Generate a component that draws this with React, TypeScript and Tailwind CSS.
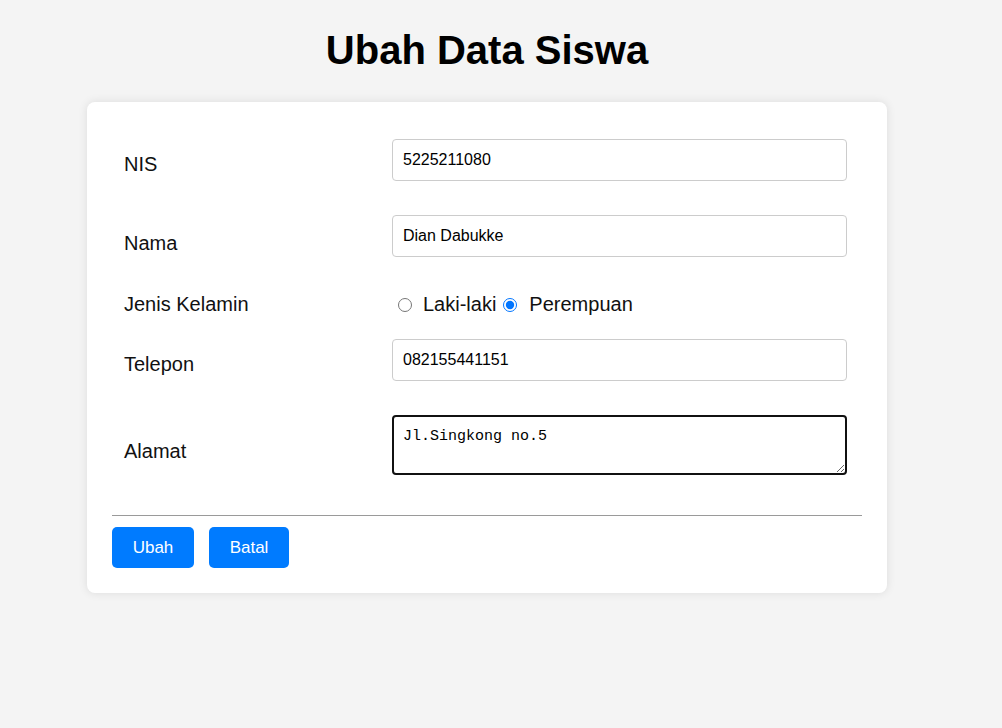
import React from "react";

const field =
  "block w-[455px] h-[42px] px-[10px] border border-[#cccccc] rounded-[4px] bg-white text-[16px] text-black outline-none";

export default function App() {
  return (
    <div className="min-h-screen bg-[#f4f4f4] font-['Liberation_Sans',Arial,sans-serif] text-[#111]">
      <div className="w-[800px] ml-[87px] pt-[27px] pb-[40px]">
        <h1 className="text-center text-[40px] leading-[46px] font-bold text-black mb-[29px]">
          Ubah Data Siswa
        </h1>

        <form className="bg-white rounded-lg shadow-[0_0_10px_rgba(0,0,0,0.1)] p-[25px]">
          {/* NIS */}
          <div className="flex h-[76px]">
            <label className="w-[280px] pl-[12px] mt-[26px] text-[20px] leading-[23px]">NIS</label>
            <div className="mt-[12px]">
              <input className={field} defaultValue="5225211080" />
            </div>
          </div>

          {/* Nama */}
          <div className="flex h-[76px]">
            <label className="w-[280px] pl-[12px] mt-[29px] text-[20px] leading-[23px]">Nama</label>
            <div className="mt-[12px]">
              <input className={field} defaultValue="Dian Dabukke" />
            </div>
          </div>

          {/* Jenis kelamin */}
          <div className="flex h-[48px]">
            <label className="w-[280px] pl-[12px] mt-[14px] text-[20px] leading-[23px]">Jenis Kelamin</label>
            <div className="mt-[14px] h-[23px] flex items-center text-[20px] leading-[23px]">
              <input type="radio" name="jk" className="m-0 ml-[6px] w-[14px] h-[14px]" />
              <span className="ml-[11px]">Laki-laki</span>
              <input type="radio" name="jk" defaultChecked className="m-0 ml-[7px] w-[14px] h-[14px]" />
              <span className="ml-[12px]">Perempuan</span>
            </div>
          </div>

          {/* Telepon */}
          <div className="flex h-[76px]">
            <label className="w-[280px] pl-[12px] mt-[26px] text-[20px] leading-[23px]">Telepon</label>
            <div className="mt-[12px]">
              <input className={field} defaultValue="082155441151" />
            </div>
          </div>

          {/* Alamat */}
          <div className="flex">
            <label className="w-[280px] pl-[12px] mt-[37px] text-[20px] leading-[23px]">Alamat</label>
            <div className="mt-[12px]">
              <textarea
                className="block w-[455px] h-[60px] px-[9px] pt-[11px] pb-[9px] border-2 border-[#111] rounded-[4px] bg-white text-[15px] leading-[17px] text-black font-['Liberation_Mono','DejaVu_Sans_Mono',monospace] outline-none"
                defaultValue="Jl.Singkong no.5"
              />
            </div>
          </div>

          <hr className="mt-[40px] border-0 border-t border-[#9a9a9a]" />

          <div className="flex gap-[15px] mt-[11px]">
            <button
              type="button"
              className="h-[41px] w-[82px] rounded-[5px] bg-[#007bff] text-white text-[17px]"
            >
              Ubah
            </button>
            <button
              type="button"
              className="h-[41px] w-[80px] rounded-[5px] bg-[#007bff] text-white text-[17px]"
            >
              Batal
            </button>
          </div>
        </form>
      </div>
    </div>
  );
}
